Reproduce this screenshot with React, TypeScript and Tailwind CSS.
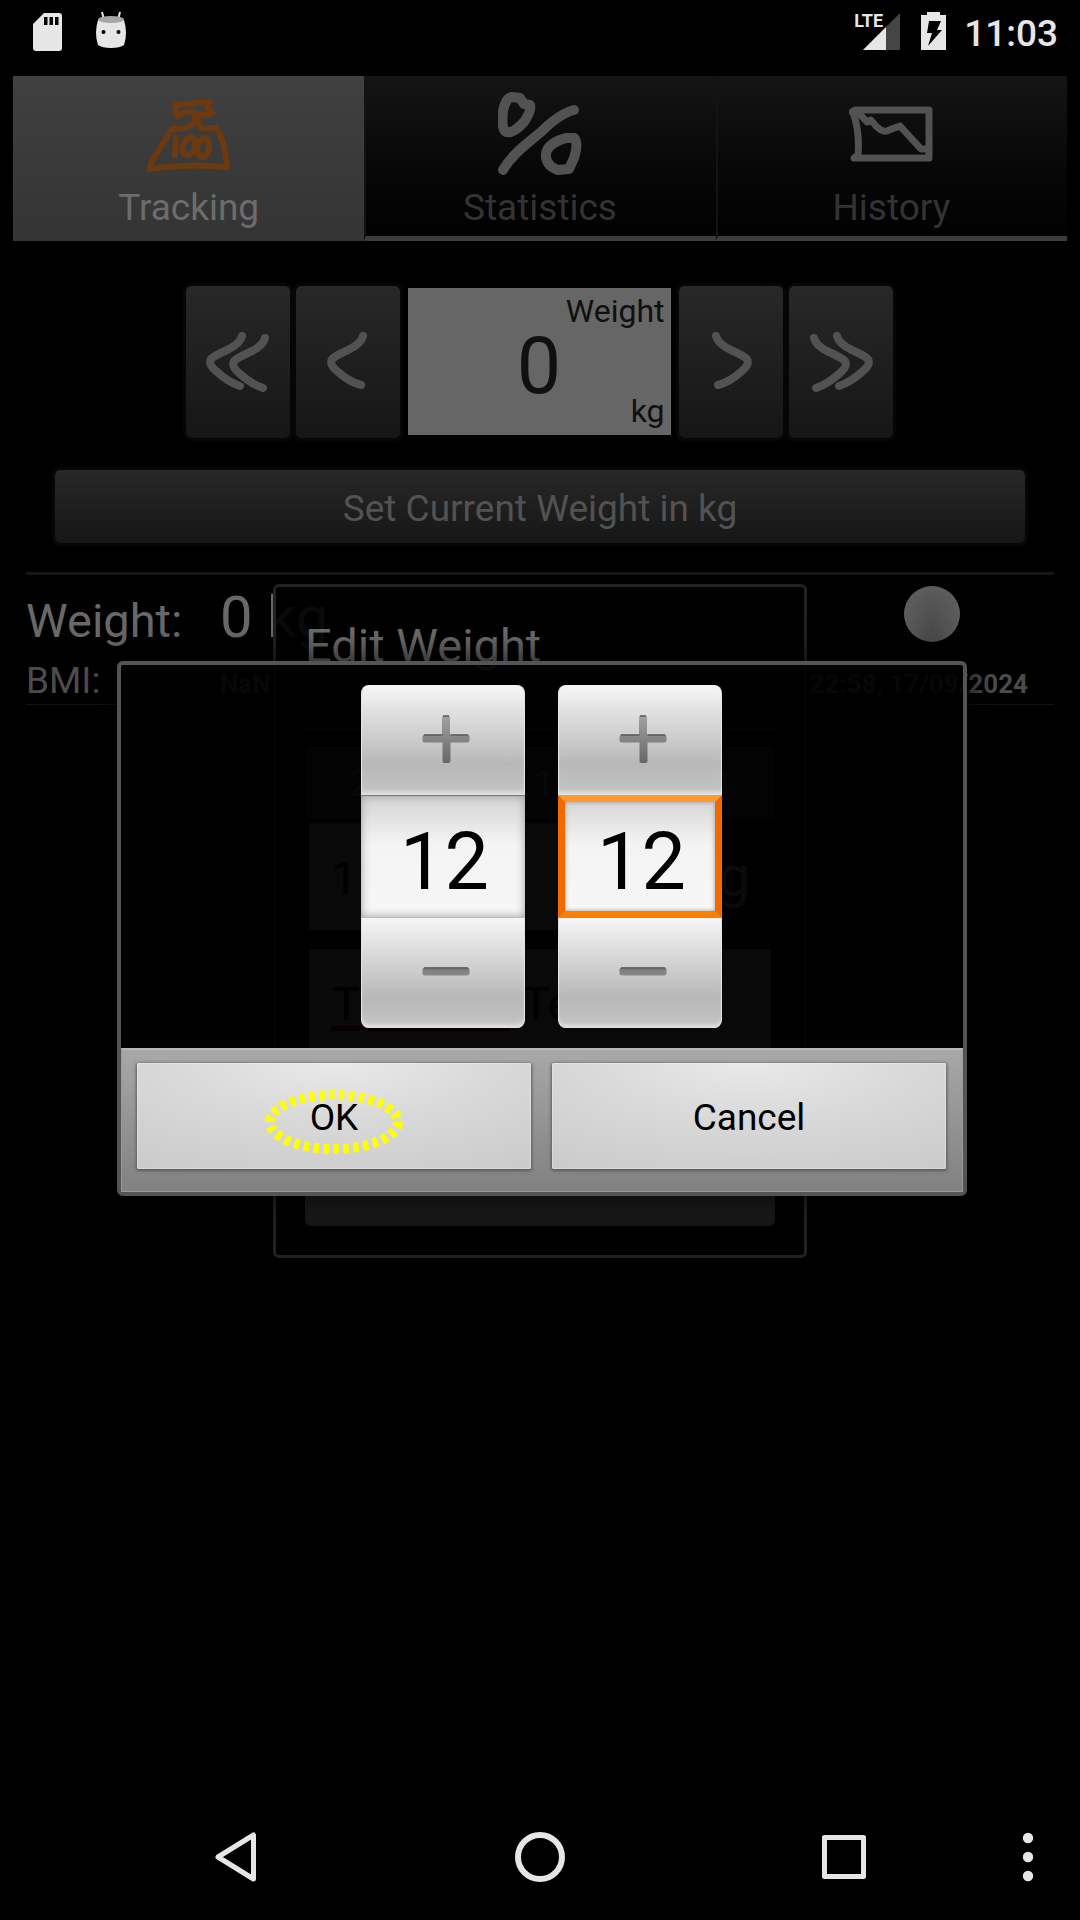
import React from "react";

const arrowButton =
  "flex h-[158px] w-[110px] shrink-0 items-center justify-center rounded-lg border-[3px] border-[#060606] bg-linear-to-b from-[#282828] to-[#161616] bg-clip-padding";

function StatusBar() {
  return (
    <header className="flex h-[63px] items-start justify-between pr-[22px] pl-8 text-[#e6e6e6]">
      <div className="flex items-start gap-8 pt-[11px]">
        <svg width="31" height="40" viewBox="0 0 31 40" aria-hidden="true">
          <path d="M12 2h15q3 0 3 3v32q0 3-3 3H4q-3 0-3-3V13z" fill="#e6e6e6" />
          <path d="M12 6h3.500v8H12zM17.500 6H21v8h-3.500zM23 6h3.500v8H23z" fill="#000" />
        </svg>
        <svg width="32" height="37" viewBox="0 0 32 37" aria-hidden="true">
          <path d="M7 1l2 8M25 1l-2 8" stroke="#e6e6e6" strokeWidth="2" />
          <path d="M3 9q-4 13 0 25 4 3 13 3t13-3q4-12 0-25z" fill="#e6e6e6" />
          <ellipse cx="16" cy="8.500" rx="13" ry="3.500" fill="#a6a6a6" />
          <circle cx="8.500" cy="21" r="2" fill="#000" />
          <circle cx="23.500" cy="21" r="2" fill="#000" />
        </svg>
      </div>
      <div className="flex items-start">
        <div className="relative pt-[10px]">
          <svg width="46" height="40" viewBox="0 0 46 40" aria-hidden="true">
            <path d="M46 3v37H9z" fill="#454545" />
            <path d="M32 17v23H9z" fill="#e6e6e6" />
          </svg>
          <span className="absolute top-[10px] left-0 text-[18px] leading-[22px] font-bold">LTE</span>
        </div>
        <svg className="mt-[11px] ml-[21px]" width="25" height="39" viewBox="0 0 25 39" aria-hidden="true">
          <path d="M6 1h13v3h6v35H0V4h6z" fill="#e6e6e6" />
          <path d="M8 10h12l-4 9h5L7 35l4-13H6z" fill="#000" />
        </svg>
        <time className="ml-[18px] pt-3 text-[37px] leading-[44px] font-medium">11:03</time>
      </div>
    </header>
  );
}

const tabs = [
  {
    label: "Tracking",
    selected: true,
    icon: (
      <g stroke="#6b3a10" strokeWidth="6">
        <path d="M28 13Q48 11 63 10L60 15 66 21Q58 24 51 22 50 32 54 36H69Q78 49 80 75 43 71 3 77L5 69 25 37Q42 38 48 30 49 20 43 19L30 24Z" />
        <path d="M29 46 28 63M46 46Q39 44 36 54 34 62 41 63 48 61 48 52 49 45 43 45M59 47Q50 47 50 58 51 65 57 65 63 61 62 51 61 46 56 46" />
      </g>
    ),
  },
  {
    label: "Statistics",
    selected: false,
    icon: (
      <g stroke="#525252" strokeWidth="10">
        <path d="M14 5 22 6 26 12 32 13Q34 18 26 30 15 42 8 40 3 37 5 19 8 5 14 5ZM5 78C14 62 30 51 43 40 52 31 64 21 76 18M62 48 68 46 76 46Q81 50 76 66L71 77 60 78Q49 74 48 65 47 54 62 48Z" />
      </g>
    ),
  },
  {
    label: "History",
    selected: false,
    icon: (
      <g stroke="#525252" strokeWidth="7">
        <path d="M3 20 6 18H80V66H5L9 63Q11 40 4 20M8 19 18 30 22 28Q33 43 40 38L51 34 72 57H78" />
      </g>
    ),
  },
];

function TabBar() {
  return (
    <nav role="tablist" className="mt-[13px] grid grid-cols-3 px-[13px]">
      {tabs.map((tab) => (
        <button
          key={tab.label}
          role="tab"
          aria-selected={tab.selected}
          className={
            tab.selected
              ? "flex flex-col items-center bg-linear-to-b from-[#404040] to-[#343434] pt-4 pb-[11px] text-[#6c6c6c]"
              : "flex flex-col items-center border-b-[5px] border-l-2 border-b-[#3c3c3c] border-l-[#131313] bg-linear-to-b from-[#151515] to-[#020202] pt-4 pr-[2px] pb-[6px] text-[#333]"
          }
        >
          <svg
            width="84"
            height="84"
            viewBox="0 0 84 84"
            fill="none"
            strokeLinecap="round"
            strokeLinejoin="round"
            aria-hidden="true"
          >
            {tab.icon}
          </svg>
          <span className="mt-[10px] text-[37px] leading-[44px]">{tab.label}</span>
        </button>
      ))}
    </nav>
  );
}

const singleArrow = "M38 5Q36 13 23 19T7 28Q4 33 12 40 24 51 36 54";
const doubleArrow = "M38 5Q36 13 23 19T7 28Q4 33 12 40 24 51 36 55M61 7Q59 15 46 21T30 30Q27 35 35 42 47 53 59 57";

function Arrow({ d, flip, wide }: { d: string; flip?: boolean; wide?: boolean }) {
  return (
    <svg
      width={wide ? 68 : 46}
      height="62"
      viewBox={wide ? "0 0 68 62" : "0 0 46 62"}
      className={flip ? "-scale-x-100" : ""}
      fill="none"
      stroke="#525252"
      strokeWidth="8"
      strokeLinecap="round"
      aria-hidden="true"
    >
      <path d={d} />
    </svg>
  );
}

function WeightEntry() {
  return (
    <section>
      <div className="mt-[42px] flex justify-center pr-[2px]">
        <button className={arrowButton} aria-label="Decrease a lot">
          <Arrow d={doubleArrow} wide />
        </button>
        <button className={arrowButton} aria-label="Decrease">
          <Arrow d={singleArrow} />
        </button>
        <div className="mx-[5px] mt-[5px] mb-[6px] flex w-[263px] flex-col bg-[#666] px-[6px] pt-1 text-[#101010]">
          <span className="text-right text-[32px] leading-[38px]">Weight</span>
          <output className="h-[62px] text-center text-[79px] leading-[72px]">0</output>
          <span className="text-right text-[32px] leading-[38px]">kg</span>
        </div>
        <button className={arrowButton} aria-label="Increase">
          <Arrow d={singleArrow} flip />
        </button>
        <button className={arrowButton} aria-label="Increase a lot">
          <Arrow d={doubleArrow} flip wide />
        </button>
      </div>
      <div className="mt-[26px] px-[52px]">
        <button className="h-[79px] w-full rounded-lg border-[3px] border-[#060606] bg-linear-to-b from-[#282828] to-[#161616] bg-clip-padding pt-1 text-[37px] text-[#525252]">
          Set Current Weight in kg
        </button>
      </div>
    </section>
  );
}

function Summary() {
  return (
    <section className="mx-[26px] mt-[26px] border-t-[3px] border-b border-t-[#161616] border-b-[#121212] pb-px">
      <div className="flex h-[78px] pt-[6px] leading-[72px] text-[#686868]">
        <div className="flex flex-1 items-baseline">
          <span className="w-[194px] text-[47px]">Weight:</span>
          <span className="text-[58px]">0 kg</span>
        </div>
        <div className="mt-[5px] mr-[94px] size-14 rounded-full bg-radial-[at_50%_78%] from-[#4b4b4b] to-[#636363]" />
      </div>
      <div className="mt-[6px] flex h-[44px] items-baseline leading-[44px] text-[#4c4c4c]">
        <span className="w-[194px] text-[37px]">BMI:</span>
        <span className="flex-1 text-[26px] font-bold">NaN</span>
        <time className="mr-[26px] text-[26px] font-bold">22:58, 17/09/2024</time>
      </div>
    </section>
  );
}

function EditWeightDialog() {
  return (
    <div className="absolute inset-0 flex items-center justify-center pb-4">
      <section
        role="dialog"
        aria-label="Edit Weight"
        className="w-[534px] max-w-full rounded-md border-[3px] border-[#222] bg-black/90 px-[29px] pt-[31px] pb-[29px]"
      >
        <h2 className="text-[47px] leading-[56px] text-[#6b6b6b]">Edit Weight</h2>
        <hr className="mt-[54px] border-t-2 border-[#333]" />
        <button className="mt-4 flex h-[73px] w-full items-center justify-between rounded-md bg-[#282828] px-[44px] pt-[3px] text-[37px] text-[#525252]">
          <span>22:58,</span>
          <time>17/09/2024</time>
        </button>
        <label className="mt-1 flex h-[107px] items-center gap-2 px-1 text-[58px] text-[#6b6b6b]">
          <input
            className="h-full w-[372px] bg-[#606060] pt-[2px] pl-[22px] text-[47px] text-black outline-none"
            defaultValue="12"
            aria-label="Weight"
          />
          kg
        </label>
        <div className="mx-1 mt-[19px] h-[181px] bg-[#606060]">
          <textarea
            className="block h-[77px] w-full resize-none overflow-hidden pt-5 pl-[23px] text-[47px] leading-[70px] text-black outline-none"
            defaultValue="Tracking Test"
            aria-label="Comment"
          />
          <div className="ml-[22px] h-[5px] w-[178px] bg-[#5a0000]" />
        </div>
        <button
          aria-label="Save"
          className="mt-[23px] block h-[73px] w-full rounded-md bg-linear-to-b from-[#282828] to-[#161616]"
        />
      </section>
    </div>
  );
}

function StepIcon({ plus }: { plus?: boolean }) {
  const id = plus ? "stepPlus" : "stepMinus";
  return (
    <svg width="48" height="50" viewBox="0 0 48 50" className="mb-[2px] ml-[6px]" aria-hidden="true">
      <defs>
        <linearGradient id={id} x1="0" y1={plus ? "0" : "20"} x2="0" y2={plus ? "48" : "29"} gradientUnits="userSpaceOnUse">
          <stop offset="0" stopColor={plus ? "#a4a4a4" : "#777"} />
          <stop offset="1" stopColor={plus ? "#686868" : "#8c8c8c"} />
        </linearGradient>
      </defs>
      <path
        d={
          plus
            ? "M22 1.500h4q2 0 2 2v17h17q2.500 0 2.500 2v4q0 2-2.500 2H28.500V47q0 2-2 2h-4q-2 0-2-2V28.500H3q-2.500 0-2.500-2v-4q0-2 2.500-2h17v-17q0-2 2-2z"
            : "M3 20.500h42q2.500 0 2.500 2v4q0 2-2.500 2H3q-2.500 0-2.500-2v-4q0-2 2.500-2z"
        }
        fill={`url(#${id})`}
      />
      <path d={plus ? "M2 21h18.500M28.500 21H46M21 2h6" : "M2 21h44"} stroke="#5c5c5c" strokeWidth="1.500" />
    </svg>
  );
}

const stepButton =
  "flex h-[110px] items-center justify-center border-x border-[#e4e4e4] bg-linear-to-b from-[#f6f6f6] via-[#b8b8b8] via-72% to-[#c4c4c4] shadow-[inset_0_-6px_5px_-3px_#e6e6e6]";

function NumberPicker({ label, focused }: { label: string; focused?: boolean }) {
  return (
    <div className="flex w-[164px] flex-col">
      <button className={`${stepButton} rounded-t-lg`} aria-label={`Increase ${label}`}>
        <StepIcon plus />
      </button>
      <input
        aria-label={label}
        defaultValue="12"
        className={
          focused
            ? "h-[123px] w-full border-[7px] border-t-[#ff9a33] border-r-[#f06a00] border-b-[#fb8000] border-l-[#f06a00] bg-linear-to-b from-[#d8d8d8] via-[#f4f4f4] via-40% to-[#f6f6f6] pt-[11px] pl-[3px] text-center text-[79px] leading-[96px] text-black shadow-[inset_0_0_4px_#999] outline-none"
            : "h-[123px] w-full border-t border-t-[#777] border-b border-b-[#bbb] bg-linear-to-b from-[#d4d4d4] via-[#f4f4f4] via-40% to-[#f6f6f6] pt-[11px] pl-[3px] text-center text-[79px] leading-[96px] text-black shadow-[inset_0_0_8px_#999] outline-none"
        }
      />
      <button className={`${stepButton} rounded-b-lg`} aria-label={`Decrease ${label}`}>
        <StepIcon />
      </button>
    </div>
  );
}

const dialogButton =
  "relative h-[106px] flex-1 rounded-xs bg-[radial-gradient(ellipse_90%_120%_at_50%_0%,#e9e9e9,#d9d9d9_45%,#cacaca)] pt-[3px] text-[37px] text-black shadow-[0_1px_3px_1px_#5c5c5c,inset_0_0_2px_#fff]";

function PickerDialog() {
  return (
    <div className="absolute inset-0 flex items-center justify-center pl-1">
      <section
        role="dialog"
        aria-label="Pick weight"
        className="w-[850px] max-w-full rounded-md border-4 border-[#545454] bg-black/91 shadow-[0_0_28px_6px_#000000aa]"
      >
        <div className="flex justify-center gap-[33px] py-5 pr-px">
          <NumberPicker label="kilograms" />
          <NumberPicker label="decimals" focused />
        </div>
        <div className="flex gap-[21px] border border-t-2 border-[#999] border-t-[#b8b8b8] bg-linear-to-b from-[#a8a8a8] to-[#818181] pt-[13px] pr-4 pb-[22px] pl-[15px]">
          <button className={dialogButton}>
            OK
            <svg
              className="absolute inset-0 m-auto translate-y-[6px]"
              width="140"
              height="66"
              viewBox="0 0 140 66"
              aria-hidden="true"
            >
              <ellipse
                cx="70"
                cy="33"
                rx="64"
                ry="27"
                fill="none"
                stroke="#ff0"
                strokeWidth="10"
                pathLength="300"
                strokeDasharray="5.500 4.500"
              />
            </svg>
          </button>
          <button className={dialogButton}>Cancel</button>
        </div>
      </section>
    </div>
  );
}

function NavigationBar() {
  return (
    <nav className="grid h-[126px] grid-cols-[56px_1fr_1fr_1fr_104px] items-center text-[#e6e6e6]">
      <span />
      <button aria-label="Back" className="flex justify-center pl-[54px]">
        <svg
          width="44"
          height="52"
          viewBox="0 0 44 52"
          fill="none"
          stroke="currentColor"
          strokeWidth="5"
          strokeLinejoin="round"
          aria-hidden="true"
        >
          <path d="M39.500 4v44L4 26z" />
        </svg>
      </button>
      <button aria-label="Home" className="flex justify-center pl-12">
        <svg width="52" height="52" viewBox="0 0 52 52" fill="none" stroke="currentColor" strokeWidth="6" aria-hidden="true">
          <circle cx="26" cy="26" r="22" />
        </svg>
      </button>
      <button aria-label="Recent apps" className="flex justify-center pl-[42px]">
        <svg
          width="44"
          height="44"
          viewBox="0 0 44 44"
          fill="none"
          stroke="currentColor"
          strokeWidth="5"
          strokeLinejoin="round"
          aria-hidden="true"
        >
          <path d="M2.500 2.500h39v39h-39z" />
        </svg>
      </button>
      <button aria-label="More options" className="flex justify-center">
        <svg width="12" height="50" viewBox="0 0 12 50" fill="currentColor" aria-hidden="true">
          <circle cx="6" cy="6" r="5.200" />
          <circle cx="6" cy="25" r="5.200" />
          <circle cx="6" cy="44" r="5.200" />
        </svg>
      </button>
    </nav>
  );
}

export default function App() {
  return (
    <div className="flex min-h-screen flex-col overflow-hidden bg-black font-[Roboto,sans-serif]">
      <StatusBar />
      <main className="relative grow">
        <div className="flow-root">
          <TabBar />
          <WeightEntry />
          <Summary />
        </div>
        <EditWeightDialog />
        <PickerDialog />
      </main>
      <NavigationBar />
    </div>
  );
}
